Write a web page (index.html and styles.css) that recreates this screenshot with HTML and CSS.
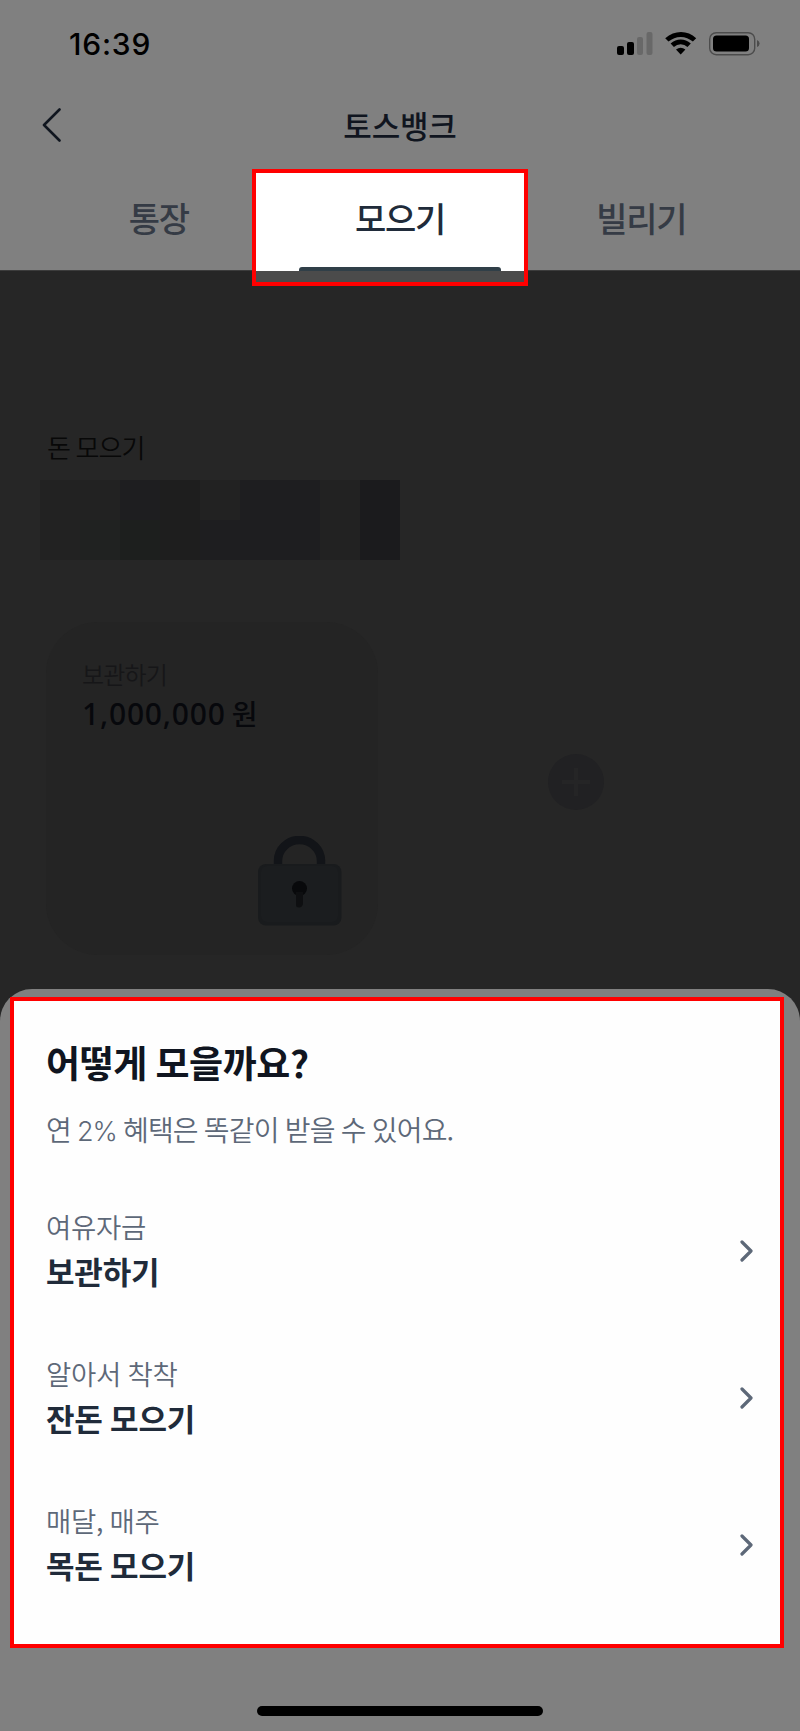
FILE: index.html
```html
<!DOCTYPE html>
<html lang="ko">
<head>
<meta charset="utf-8">
<title>토스뱅크</title>
<link rel="stylesheet" href="styles.css">
</head>
<body>
<div class="screen">
  <header class="top">
    <div class="status">
      <span class="time">16:39</span>
      <svg class="status-icons" width="144" height="24" viewBox="0 0 144 24">
        <rect x="0" y="14" width="7" height="9" rx="2"/>
        <rect x="10" y="10" width="7" height="13" rx="2"/>
        <rect x="20" y="5" width="6" height="18" rx="2" fill="#686868"/>
        <rect x="29.500" y="0" width="6" height="23" rx="2" fill="#686868"/>
        <path d="M48.200 6.300 Q55.500 0 64 0 T79.200 6.300 L75.900 9.600 Q70.500 4.900 63.700 4.900 T51.500 9.600 Z"/>
        <path d="M53.600 11.600 Q58.200 7.600 63.700 7.600 T73.800 11.600 L70.500 14.900 Q67.600 12.300 63.700 12.300 T56.900 14.900 Z"/>
        <path d="M59 17.500 Q63.700 13.900 68.400 17.500 L63.700 22.500 Z"/>
        <rect x="92.700" y=".7" width="45" height="22" rx="6.500" fill="none" stroke="#4c4c4c" stroke-width="1.400"/>
        <rect x="96" y="3.500" width="36" height="16" rx="3.500"/>
        <path d="M140 8 Q142.600 9 142.600 11.500 T140 15 Z" fill="#4c4c4c"/>
      </svg>
    </div>
    <div class="nav">
      <svg class="back" width="20" height="34" viewBox="0 0 20 34"><path d="M17.500 1.500 L2 17 L17.500 32.500"/></svg>
      <h1 class="nav-title">토스뱅크</h1>
    </div>
    <nav class="tabs">
      <span class="tab">통장</span>
      <span class="tab tab-active">모으기</span>
      <span class="tab">빌리기</span>
      <span class="focus focus-tab"></span>
    </nav>
  </header>

  <main class="content">
    <h2 class="section-title">돈 모으기</h2>
    <div class="mosaic">
      <i class="m1"></i><i class="m1"></i><i class="m3"></i><i class="m2"></i><i class="m1"></i><i class="m3"></i><i class="m3"></i><i class="m1"></i><i class="m5"></i>
      <i class="m1"></i><i class="m4"></i><i class="m4b"></i><i class="m2"></i><i class="m3"></i><i class="m3"></i><i class="m3"></i><i class="m1"></i><i class="m5"></i>
    </div>
    <div class="cards">
      <section class="card">
        <p class="card-label">보관하기</p>
        <p class="card-amount">1,000,000<span class="won">원</span></p>
        <svg class="lock" width="84" height="90" viewBox="0 0 84 90">
          <path d="M20 29 V25 A21.500 21 0 0 1 63 25 V29" fill="none" stroke="#121418" stroke-width="8.500"/>
          <rect x="0" y="28" width="83.500" height="61.500" rx="8" fill="#191b1d"/>
          <rect x="3" y="30" width="77" height="56" rx="6" fill="#1b1d1f"/>
          <circle cx="41.500" cy="52.500" r="7.500" fill="#08090b"/>
          <path d="M38 56 V69 Q38 71.500 41 71.500 T45 68 V56 Z" fill="#0e0f11"/>
        </svg>
      </section>
      <div class="add">
        <svg width="56" height="56" viewBox="0 0 56 56"><circle cx="28" cy="28" r="28" fill="#212123"/><path d="M28 14 V42 M14 28 H42" stroke="#252526" stroke-width="4"/></svg>
      </div>
    </div>
  </main>

  <section class="sheet">
    <span class="focus focus-sheet"></span>
    <h2 class="sheet-title">어떻게 모을까요?</h2>
    <p class="sheet-sub">연 <span class="rate">2%</span> 혜택은 똑같이 받을 수 있어요.</p>
    <ul class="options">
      <li class="option"><div><p class="option-label">여유자금</p><p class="option-name">보관하기</p></div>
        <svg class="chevron" width="14" height="22" viewBox="0 0 14 22"><path d="M2 2 L11 11 L2 20"/></svg></li>
      <li class="option"><div><p class="option-label">알아서 착착</p><p class="option-name">잔돈 모으기</p></div>
        <svg class="chevron" width="14" height="22" viewBox="0 0 14 22"><path d="M2 2 L11 11 L2 20"/></svg></li>
      <li class="option"><div><p class="option-label">매달, 매주</p><p class="option-name">목돈 모으기</p></div>
        <svg class="chevron" width="14" height="22" viewBox="0 0 14 22"><path d="M2 2 L11 11 L2 20"/></svg></li>
    </ul>
    <div class="home-bar"></div>
  </section>
</div>
</body>
</html>
```
FILE: styles.css
```css
* { box-sizing: border-box; margin: 0; padding: 0; }
body { background: #262626; font-family: "Noto Sans CJK KR", sans-serif; }
.screen { width: 800px; height: 1731px; display: flex; flex-direction: column; overflow: hidden; }

.top { height: 271px; background: #808080; border-bottom: 1px solid #3c3c3c; }
.status { height: 88px; display: flex; justify-content: space-between; padding: 0 40px 0 69px; align-items: center; }
.time { font: 550 30px/36px Inter, sans-serif; color: #000; letter-spacing: .8px; }
.status-icons { margin: -1px -1px 0 0; }
.nav { height: 81px; display: grid; grid-template-columns: 60px 1fr 60px; padding: 0 42px; }
.back { margin-top: 20px; fill: none; stroke: #10161f; stroke-width: 2.6; stroke-linecap: round; stroke-linejoin: round; }
.nav-title { font-size: 31px; font-weight: 500; line-height: 74px; text-align: center; color: #10151f; letter-spacing: -.2px; }
.tabs { position: relative; height: 102px; padding: 0 38px; display: grid; grid-template-columns: repeat(3, 1fr); }
.tab { font-size: 34px; font-weight: 500; line-height: 97px; text-align: center; color: #353b45; letter-spacing: -1.3px; }
.tab-active { position: relative; z-index: 1; color: #202b3a; }
.tab-active::after { content: ""; position: absolute; left: 20px; top: 98px; width: 202px; height: 3.500px; border-radius: 3px 3px 0 0; background: #303f48; }

.focus { position: absolute; border: 4px solid #f00; }
.focus-tab { left: 252px; top: 0; width: 276px; height: 117px; background: linear-gradient(#fff 97.500px, #4b4b4b 97.500px); }
.focus-sheet { z-index: -1; left: 10px; top: 8px; width: 774px; height: 651px; background: #fefefe; }

.content { height: 718px; padding: 156px 46px 0; background: #262626; }
.section-title { font-size: 26px; font-weight: 350; line-height: 40px; color: #080808; letter-spacing: -.9px; word-spacing: -1px; padding-left: 1px; }
.mosaic { display: grid; grid-template-columns: repeat(9, 40px); grid-auto-rows: 40px; margin: 13px 0 0 -6px; }
.m1 { background: #222; }
.m2 { background: #1e1e1e; }
.m3 { background: #1e1e20; }
.m4 { background: #202221; }
.m4b { background: #1d1f1e; }
.m5 { background: #1b1b1d; }
.cards { display: grid; grid-template-columns: 332px 332px; gap: 32px; margin-top: 62px; }
.card { height: 333px; border-radius: 52px; background: #242424; padding: 34px 36px 0; display: flex; flex-direction: column; }
.card-label { font-size: 24px; font-weight: 350; line-height: 36px; color: #161618; letter-spacing: -.8px; }
.card-amount { font-size: 30px; font-weight: 500; line-height: 44px; color: #07080c; font-family: "Noto Sans", "Noto Sans CJK KR", sans-serif; letter-spacing: .8px; }
.won { margin-left: 6px; font-size: 28px; }
.lock { align-self: flex-end; margin-top: 100px; }
.add { display: flex; align-items: center; justify-content: center; padding-bottom: 13px; }

.sheet { position: relative; z-index: 1; height: 742px; background: #808080; border-radius: 32px 32px 0 0; padding: 8px 0 0 10px; }
.sheet-title { padding: 37px 0 0 36px; font-size: 37px; font-weight: 700; line-height: 56px; color: #101520; letter-spacing: -.4px; word-spacing: -1.500px; }
.sheet-sub { padding: 19px 0 0 36px; font-size: 28px; font-weight: 350; line-height: 40px; color: #5d6878; letter-spacing: -.8px; word-spacing: -1px; }
.rate { font-family: Inter, sans-serif; font-size: 27px; font-weight: 300; line-height: 1; letter-spacing: -1px; }
.options { list-style: none; padding: 29px 30px 0 36px; }
.option { height: 146.700px; display: flex; justify-content: space-between; align-items: center; }
.option > div { margin-top: -4px; }
.option-label { font-size: 27.500px; font-weight: 350; line-height: 44px; color: #5d6878; letter-spacing: -.3px; word-spacing: -1px; }
.option-name { font-size: 31px; font-weight: 700; line-height: 46px; color: #202b3a; letter-spacing: -.2px; word-spacing: -1px; }
.chevron { margin-right: 16px; fill: none; stroke: #5d6878; stroke-width: 3.2; stroke-linecap: round; stroke-linejoin: round; }
.home-bar { width: 286px; height: 10px; margin: 88px 0 0 247px; border-radius: 5px; background: #000; }
```
